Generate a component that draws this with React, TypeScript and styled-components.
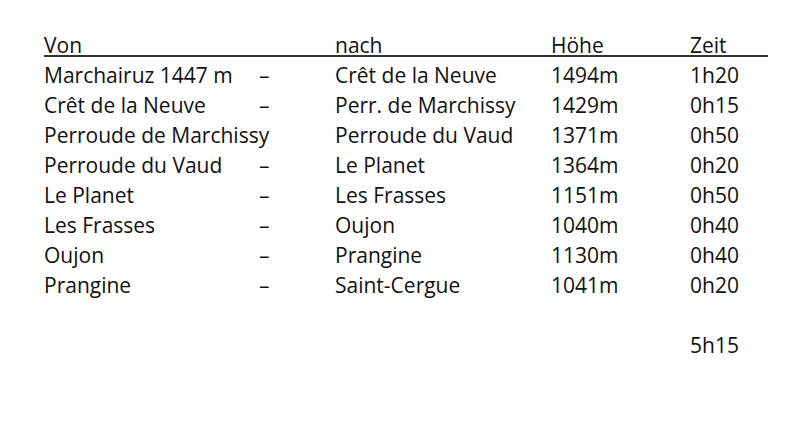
import styled, { createGlobalStyle } from "styled-components";

type Leg = {
  from: string;
  dash: boolean;
  to: string;
  height: string;
  time: string;
};

const legs: Leg[] = [
  { from: "Marchairuz 1447 m", dash: true, to: "Crêt de la Neuve", height: "1494m", time: "1h20" },
  { from: "Crêt de la Neuve", dash: true, to: "Perr. de Marchissy", height: "1429m", time: "0h15" },
  { from: "Perroude de Marchissy", dash: false, to: "Perroude du Vaud", height: "1371m", time: "0h50" },
  { from: "Perroude du Vaud", dash: true, to: "Le Planet", height: "1364m", time: "0h20" },
  { from: "Le Planet", dash: true, to: "Les Frasses", height: "1151m", time: "0h50" },
  { from: "Les Frasses", dash: true, to: "Oujon", height: "1040m", time: "0h40" },
  { from: "Oujon", dash: true, to: "Prangine", height: "1130m", time: "0h40" },
  { from: "Prangine", dash: true, to: "Saint-Cergue", height: "1041m", time: "0h20" },
];

export default function App() {
  return (
    <>
      <GlobalStyle />
      <Page>
        <Table>
          <Header>
            <Cell>Von</Cell>
            <Cell />
            <Cell>nach</Cell>
            <Cell>Höhe</Cell>
            <Cell>Zeit</Cell>
          </Header>
          {legs.map((leg) => (
            <Row key={leg.from}>
              <Cell>{leg.from}</Cell>
              <Cell>{leg.dash ? "–" : ""}</Cell>
              <Cell>{leg.to}</Cell>
              <Cell>{leg.height}</Cell>
              <Cell>{leg.time}</Cell>
            </Row>
          ))}
          <Row />
          <Row>
            <Cell />
            <Cell />
            <Cell />
            <Cell />
            <Cell>5h15</Cell>
          </Row>
        </Table>
      </Page>
    </>
  );
}

const GlobalStyle = createGlobalStyle`
  html, body {
    margin: 0;
    padding: 0;
    background: #ffffff;
  }
  body {
    font-family: "Open Sans", Lato, sans-serif;
    color: #111111;
  }
`;

const Page = styled.div`
  width: 800px;
  height: 443px;
  padding: 30px 0 0 44px;
  box-sizing: border-box;
  font-size: 21px;
`;

const Table = styled.div`
  width: 724px;
`;

const Row = styled.div`
  display: grid;
  grid-template-columns: 215px 76px 216px 139px 78px;
  height: 30px;
  line-height: 30px;
`;

const Header = styled(Row)`
  height: 25px;
  border-bottom: 2px solid #333333;
  margin-bottom: 3px;
`;

const Cell = styled.div`
  white-space: nowrap;
`;
